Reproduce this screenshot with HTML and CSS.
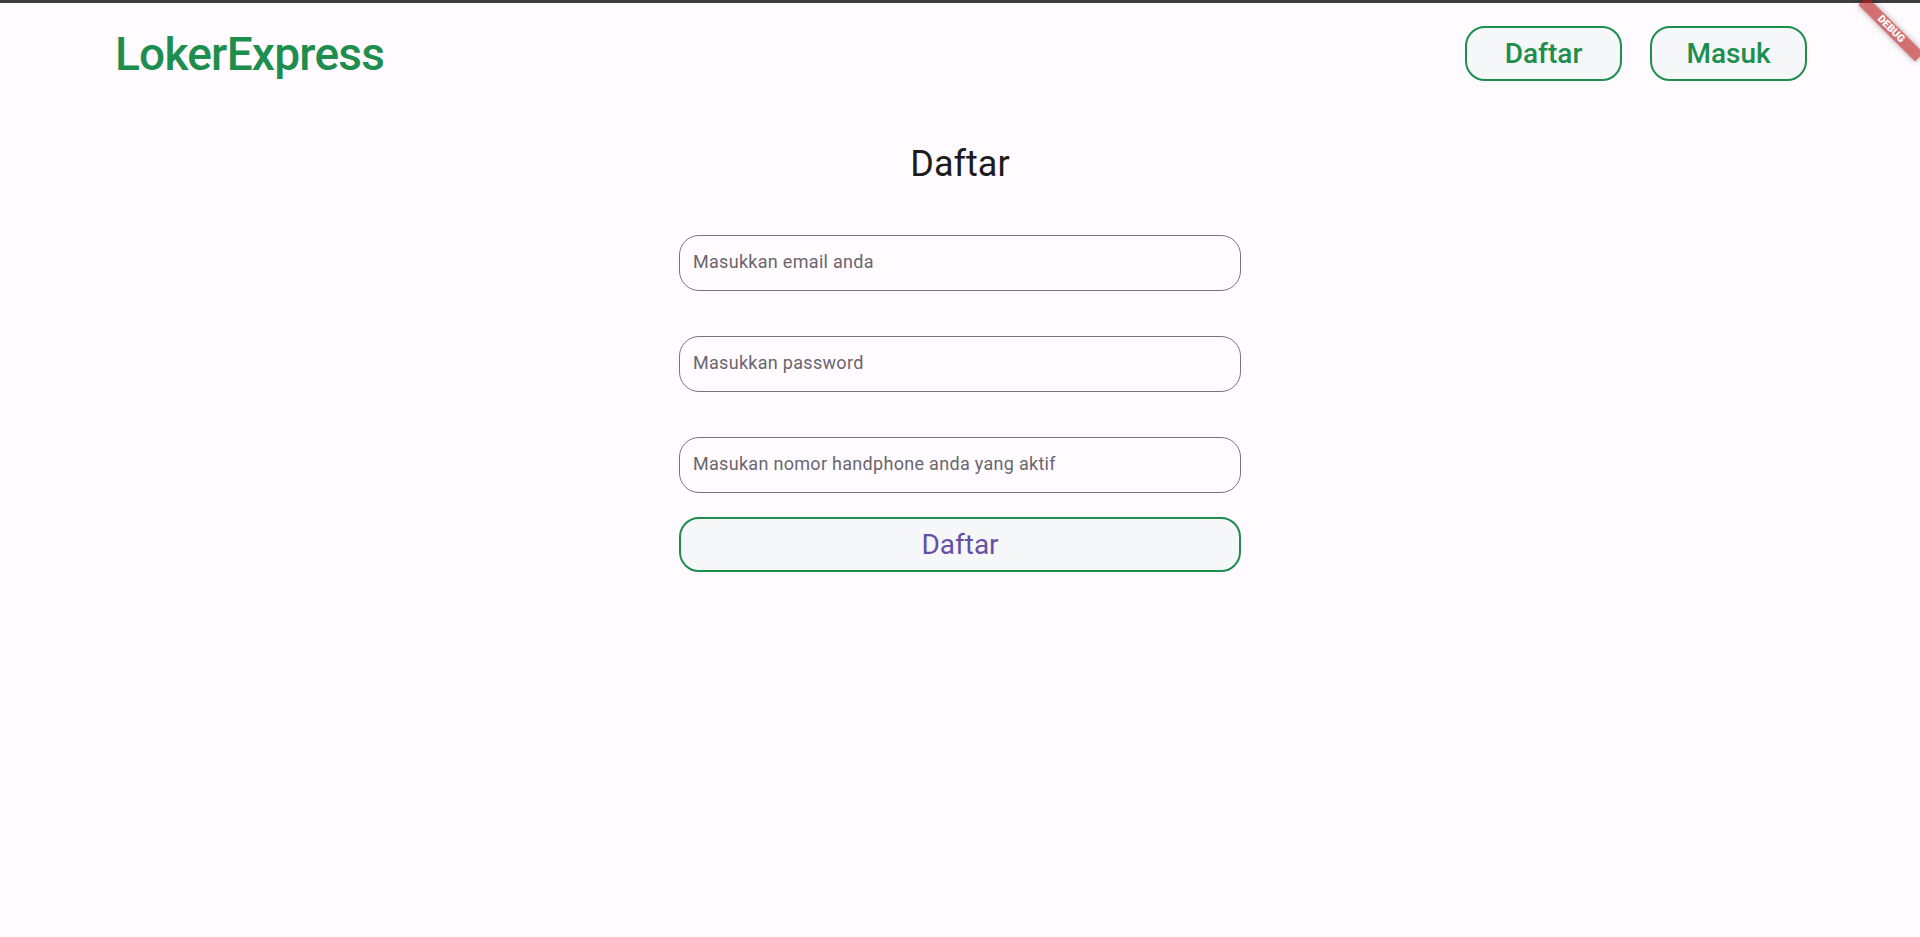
FILE: index.html
```html
<!DOCTYPE html>
<html lang="id">
<head>
<meta charset="utf-8">
<title>LokerExpress - Daftar</title>
<link rel="stylesheet" href="styles.css">
</head>
<body>
<div class="topline"></div>
<header class="header">
  <div class="logo">LokerExpress</div>
  <nav class="nav">
    <button class="nav-btn">Daftar</button>
    <button class="nav-btn">Masuk</button>
  </nav>
</header>
<main class="main">
  <h1 class="title">Daftar</h1>
  <form class="form">
    <input class="field" type="email" placeholder="Masukkan email anda">
    <input class="field" type="password" placeholder="Masukkan password">
    <input class="field" type="tel" placeholder="Masukan nomor handphone anda yang aktif">
    <button class="submit" type="button">Daftar</button>
  </form>
</main>
<div class="debug-banner">DEBUG</div>
</body>
</html>
```
FILE: styles.css
```css
* { box-sizing: border-box; }
html, body { margin: 0; padding: 0; }
body {
  background: #fffbfe;
  font-family: Roboto, "Noto Sans", sans-serif;
  min-height: 937px;
  overflow: hidden;
}
.topline {
  height: 3px;
  background: #3d3d3d;
}
.header {
  display: flex;
  align-items: center;
  justify-content: space-between;
  padding: 23px 113px 0 115px;
}
.logo {
  color: #1e8e4e;
  font-size: 46px;
  font-weight: 500;
  letter-spacing: -0.75px;
  line-height: 48px;
}
.nav {
  display: flex;
  gap: 28px;
}
.nav-btn {
  width: 157px;
  height: 55px;
  border: 2px solid #1e8e4e;
  border-radius: 20px;
  background: #f5f7f9;
  color: #1e8e4e;
  font-family: Roboto, sans-serif;
  font-size: 28px;
  font-weight: 500;
  padding: 0;
  cursor: pointer;
}
.main {
  display: flex;
  flex-direction: column;
  align-items: center;
}
.title {
  margin: 62px 0 0;
  font-size: 36px;
  font-weight: 400;
  line-height: 42px;
  color: #1d1b20;
}
.form {
  margin-top: 50px;
  width: 562px;
  display: flex;
  flex-direction: column;
}
.field {
  height: 56px;
  width: 100%;
  border: 1px solid #79747e;
  border-radius: 20px;
  background: transparent;
  padding: 0 13px 4px;
  font-family: Roboto, sans-serif;
  font-size: 18px;
  letter-spacing: 0.3px;
  color: #1d1b20;
  outline: none;
  margin-bottom: 45px;
}
.field::placeholder { color: #6a666e; }
.field:nth-child(3) { margin-bottom: 24px; }
.submit {
  height: 55px;
  width: 100%;
  border: 2px solid #1e8e4e;
  border-radius: 20px;
  background: #f5f7f9;
  color: #6750a4;
  font-family: Roboto, sans-serif;
  font-size: 28px;
  font-weight: 400;
  padding: 0;
  cursor: pointer;
}
.debug-banner {
  position: absolute;
  left: 1851px;
  top: 23px;
  width: 80px;
  height: 12px;
  background: rgba(183, 28, 28, 0.63);
  box-shadow: 0 0 6px rgba(0, 0, 0, 0.35);
  color: #fff;
  font-family: Roboto, sans-serif;
  font-size: 10.5px;
  font-weight: 900;
  line-height: 12px;
  text-align: center;
  transform: rotate(45deg);
}
```
